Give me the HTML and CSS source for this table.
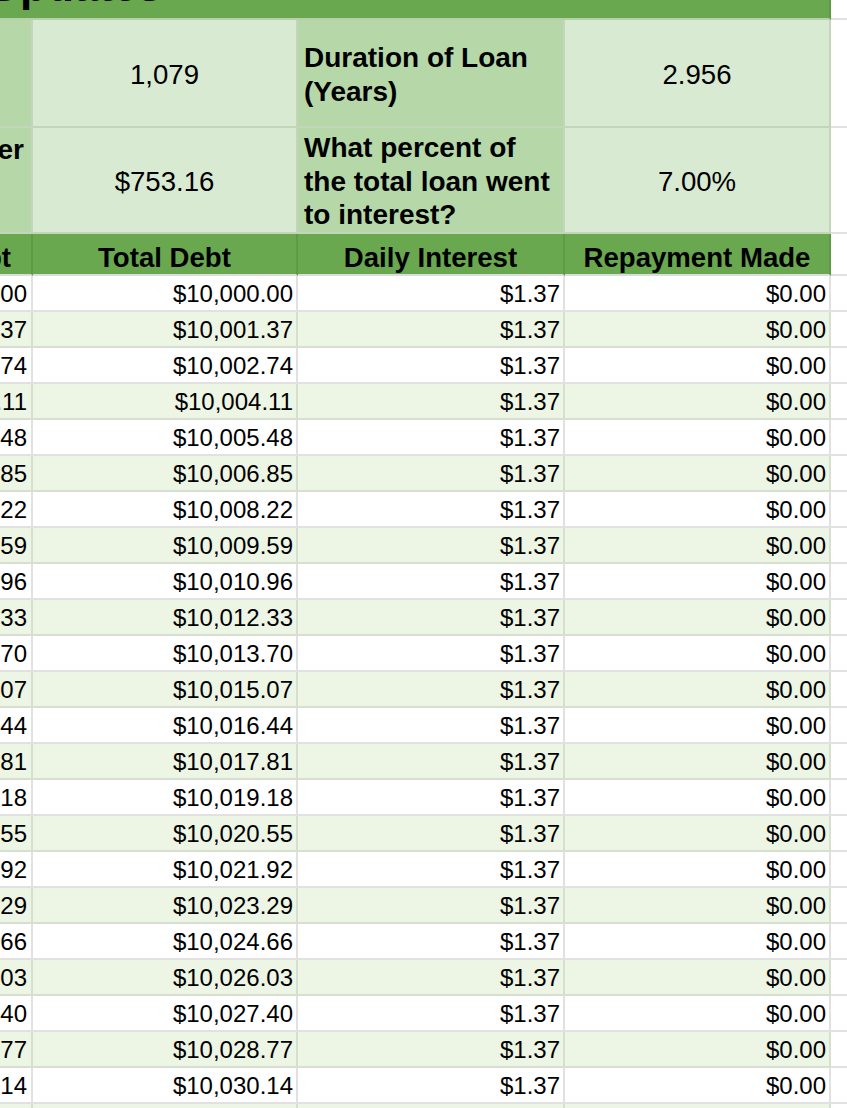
FILE: index.html
```html
<!DOCTYPE html>
<html lang="en">
<head>
<meta charset="utf-8">
<title>Loan Updates</title>
<link rel="stylesheet" href="styles.css">
</head>
<body>
<div class="sheet">
  <div class="cell title-cell"><span class="title-text">Loan Updates</span></div>
  <div class="cell blank"></div>

  <div class="cell label clip"></div>
  <div class="cell value">1,079</div>
  <div class="cell label"><span>Duration of Loan<br>(Years)</span></div>
  <div class="cell value">2.956</div>
  <div class="cell blank"></div>

  <div class="cell label clip clip-top"><span>Monthly Payment per</span></div>
  <div class="cell value">$753.16</div>
  <div class="cell label"><span>What percent of<br>the total loan went<br>to interest?</span></div>
  <div class="cell value">7.00%</div>
  <div class="cell blank"></div>

  <div class="cell head clip"><span>Starting Debt</span></div>
  <div class="cell head">Total Debt</div>
  <div class="cell head">Daily Interest</div>
  <div class="cell head">Repayment Made</div>
  <div class="cell blank"></div>

  <div class="cell num clip"><span>$10,000.00</span></div><div class="cell num">$10,000.00</div><div class="cell num">$1.37</div><div class="cell num">$0.00</div><div class="cell blank"></div>
  <div class="cell num band clip"><span>$10,001.37</span></div><div class="cell num band">$10,001.37</div><div class="cell num band">$1.37</div><div class="cell num band">$0.00</div><div class="cell blank"></div>
  <div class="cell num clip"><span>$10,002.74</span></div><div class="cell num">$10,002.74</div><div class="cell num">$1.37</div><div class="cell num">$0.00</div><div class="cell blank"></div>
  <div class="cell num band clip"><span>$10,004.11</span></div><div class="cell num band">$10,004.11</div><div class="cell num band">$1.37</div><div class="cell num band">$0.00</div><div class="cell blank"></div>
  <div class="cell num clip"><span>$10,005.48</span></div><div class="cell num">$10,005.48</div><div class="cell num">$1.37</div><div class="cell num">$0.00</div><div class="cell blank"></div>
  <div class="cell num band clip"><span>$10,006.85</span></div><div class="cell num band">$10,006.85</div><div class="cell num band">$1.37</div><div class="cell num band">$0.00</div><div class="cell blank"></div>
  <div class="cell num clip"><span>$10,008.22</span></div><div class="cell num">$10,008.22</div><div class="cell num">$1.37</div><div class="cell num">$0.00</div><div class="cell blank"></div>
  <div class="cell num band clip"><span>$10,009.59</span></div><div class="cell num band">$10,009.59</div><div class="cell num band">$1.37</div><div class="cell num band">$0.00</div><div class="cell blank"></div>
  <div class="cell num clip"><span>$10,010.96</span></div><div class="cell num">$10,010.96</div><div class="cell num">$1.37</div><div class="cell num">$0.00</div><div class="cell blank"></div>
  <div class="cell num band clip"><span>$10,012.33</span></div><div class="cell num band">$10,012.33</div><div class="cell num band">$1.37</div><div class="cell num band">$0.00</div><div class="cell blank"></div>
  <div class="cell num clip"><span>$10,013.70</span></div><div class="cell num">$10,013.70</div><div class="cell num">$1.37</div><div class="cell num">$0.00</div><div class="cell blank"></div>
  <div class="cell num band clip"><span>$10,015.07</span></div><div class="cell num band">$10,015.07</div><div class="cell num band">$1.37</div><div class="cell num band">$0.00</div><div class="cell blank"></div>
  <div class="cell num clip"><span>$10,016.44</span></div><div class="cell num">$10,016.44</div><div class="cell num">$1.37</div><div class="cell num">$0.00</div><div class="cell blank"></div>
  <div class="cell num band clip"><span>$10,017.81</span></div><div class="cell num band">$10,017.81</div><div class="cell num band">$1.37</div><div class="cell num band">$0.00</div><div class="cell blank"></div>
  <div class="cell num clip"><span>$10,019.18</span></div><div class="cell num">$10,019.18</div><div class="cell num">$1.37</div><div class="cell num">$0.00</div><div class="cell blank"></div>
  <div class="cell num band clip"><span>$10,020.55</span></div><div class="cell num band">$10,020.55</div><div class="cell num band">$1.37</div><div class="cell num band">$0.00</div><div class="cell blank"></div>
  <div class="cell num clip"><span>$10,021.92</span></div><div class="cell num">$10,021.92</div><div class="cell num">$1.37</div><div class="cell num">$0.00</div><div class="cell blank"></div>
  <div class="cell num band clip"><span>$10,023.29</span></div><div class="cell num band">$10,023.29</div><div class="cell num band">$1.37</div><div class="cell num band">$0.00</div><div class="cell blank"></div>
  <div class="cell num clip"><span>$10,024.66</span></div><div class="cell num">$10,024.66</div><div class="cell num">$1.37</div><div class="cell num">$0.00</div><div class="cell blank"></div>
  <div class="cell num band clip"><span>$10,026.03</span></div><div class="cell num band">$10,026.03</div><div class="cell num band">$1.37</div><div class="cell num band">$0.00</div><div class="cell blank"></div>
  <div class="cell num clip"><span>$10,027.40</span></div><div class="cell num">$10,027.40</div><div class="cell num">$1.37</div><div class="cell num">$0.00</div><div class="cell blank"></div>
  <div class="cell num band clip"><span>$10,028.77</span></div><div class="cell num band">$10,028.77</div><div class="cell num band">$1.37</div><div class="cell num band">$0.00</div><div class="cell blank"></div>
  <div class="cell num clip"><span>$10,030.14</span></div><div class="cell num">$10,030.14</div><div class="cell num">$1.37</div><div class="cell num">$0.00</div><div class="cell blank"></div>
  <div class="cell num band clip"><span>$10,031.51</span></div><div class="cell num band">$10,031.51</div><div class="cell num band">$1.37</div><div class="cell num band">$0.00</div><div class="cell blank"></div>
</div>
</body>
</html>
```

FILE: styles.css
```css
html, body {
  margin: 0;
  padding: 0;
  background: #ffffff;
  overflow: hidden;
}

.sheet {
  display: grid;
  grid-template-columns: 33px 265px 267px 266px 1fr;
  grid-template-rows: 20px 108px 106px 42px repeat(24, 36px);
  height: 1108px;
  overflow: hidden;
  font-family: "Liberation Sans", Arial, sans-serif;
  color: #000000;
}

.cell {
  box-sizing: border-box;
  border-right: 2px solid #e1e1e1;
  border-bottom: 2px solid #e1e1e1;
  display: flex;
  align-items: center;
  min-width: 0;
  overflow: hidden;
  white-space: nowrap;
}

.blank {
  background: #ffffff;
  border-right: none;
}

.title-cell {
  grid-column: 1 / 5;
  background: #6aa84f;
  border-right: 2px solid #5f9b46;
  border-bottom: 2px solid #b7cfaa;
  position: relative;
}

.title-text {
  position: absolute;
  left: -129px;
  bottom: 10px;
  font-size: 44px;
  font-weight: 700;
  line-height: 44px;
  white-space: nowrap;
}

.label {
  background: #b6d7a8;
  border-right-color: #c3d6b9;
  border-bottom-color: #c3d6b9;
  font-size: 28px;
  font-weight: 700;
  line-height: 33.5px;
  padding-left: 6px;
  padding-top: 3px;
  white-space: normal;
}

.value {
  background: #d9ead3;
  border-right-color: #c3d6b9;
  border-bottom-color: #c3d6b9;
  font-size: 27.6px;
  justify-content: center;
  padding-top: 3px;
}

.clip {
  justify-content: flex-end;
  padding-left: 0;
  padding-right: 7px;
  white-space: nowrap;
}

.clip-top {
  align-items: flex-start;
  padding-top: 5px;
}

.head {
  background: #6aa84f;
  border-right-color: #5f9b46;
  border-bottom-color: #dcdcdc;
  font-size: 27.6px;
  font-weight: 700;
  justify-content: center;
  padding-top: 8px;
}

.head.clip {
  justify-content: flex-end;
  padding-right: 20px;
}

.num {
  background: #ffffff;
  font-size: 24px;
  justify-content: flex-end;
  padding-right: 3px;
  padding-top: 1px;
}

.num.band {
  background: #edf5e5;
  border-right-color: #d7dfd1;
  border-bottom-color: #d7dfd1;
}

.num.clip {
  padding-right: 4px;
}
```
